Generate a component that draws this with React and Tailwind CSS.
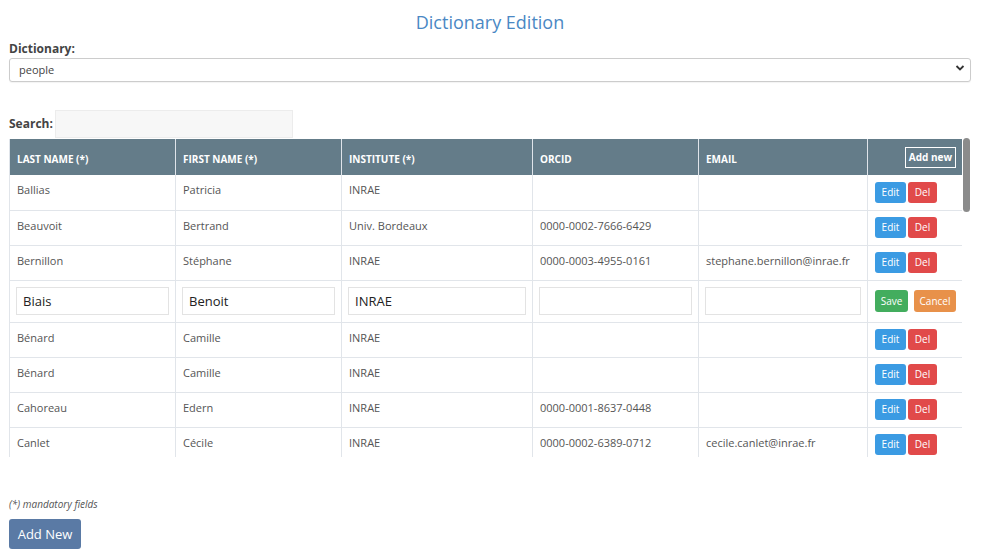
import React from 'react';

const rows = [
  { last: 'Ballias', first: 'Patricia', inst: 'INRAE', orcid: '', email: '' },
  { last: 'Beauvoit', first: 'Bertrand', inst: 'Univ. Bordeaux', orcid: '0000-0002-7666-6429', email: '' },
  { last: 'Bernillon', first: 'Stéphane', inst: 'INRAE', orcid: '0000-0003-4955-0161', email: 'stephane.bernillon@inrae.fr' },
  { edit: true, last: 'Biais', first: 'Benoit', inst: 'INRAE', orcid: '', email: '' },
  { last: 'Bénard', first: 'Camille', inst: 'INRAE', orcid: '', email: '' },
  { last: 'Bénard', first: 'Camille', inst: 'INRAE', orcid: '', email: '' },
  { last: 'Cahoreau', first: 'Edern', inst: 'INRAE', orcid: '0000-0001-8637-0448', email: '' },
  { last: 'Canlet', first: 'Cécile', inst: 'INRAE', orcid: '0000-0002-6389-0712', email: 'cecile.canlet@inrae.fr' },
];

const columns = [
  { label: 'Last name (*)', w: 'w-[166px]' },
  { label: 'First name (*)', w: 'w-[166px]' },
  { label: 'Institute (*)', w: 'w-[191px]' },
  { label: 'ORCID', w: 'w-[166px]' },
  { label: 'Email', w: 'w-[169px]' },
];

function EditInput({ value }) {
  return (
    <input
      defaultValue={value}
      className="w-full h-[28px] border border-[#e3e3e3] px-[6px] text-[13px] text-[#222] outline-none"
    />
  );
}

export default function App() {
  return (
    <div className="min-h-screen bg-white pl-[9px] pr-[13px] text-[#555] font-['Open_Sans','Noto_Sans',sans-serif]">
      <h1 className="text-center text-[18px] text-[#4a88c4] pt-[8px] leading-[28px]">Dictionary Edition</h1>

      <label className="block mt-[5px] text-[12px] font-bold text-[#444] leading-[16px]">Dictionary:</label>
      <div className="relative -mt-[1px]">
        <select className="w-full h-[24px] appearance-none rounded-[3px] border border-[#ccc] bg-white pl-[9px] text-[11px] text-[#444] outline-none shadow-[0_1px_1px_rgba(0,0,0,0.05)]">
          <option>people</option>
        </select>
        <svg className="absolute right-[6px] top-[8px] w-[10px] h-[8px] pointer-events-none" viewBox="0 0 10 8">
          <path d="M1.5 2 L5 5.5 L8.5 2" fill="none" stroke="#333" strokeWidth="1.8" />
        </svg>
      </div>

      <div className="flex items-center mt-[28px] h-[28px]">
        <span className="text-[12px] font-bold text-[#444]">Search:</span>
        <input className="ml-[2px] w-[238px] h-[28px] bg-[#f7f7f7] border border-[#ececec] outline-none" />
      </div>

      <div className="flex mt-[1px]">
        <div className="w-[954px] h-[318px] overflow-hidden">
          <table className="w-[954px] border-collapse table-fixed text-[11px]">
            <thead>
              <tr className="bg-[#647c89] h-[36px]">
                {columns.map((c) => (
                  <th key={c.label} className={`${c.w} border-x border-[#dfe4ea] text-left pl-[7px] pt-[5px] uppercase font-bold text-white text-[10px]`}>
                    {c.label}
                  </th>
                ))}
                <th className="w-[96px] border-x border-[#dfe4ea] text-right pr-[7px]">
                  <button className="border border-white text-white text-[10px] px-[3px] h-[21px] leading-[18px]">Add new</button>
                </th>
              </tr>
            </thead>
            <tbody>
              {rows.map((r, i) =>
                r.edit ? (
                  <tr key={i} className="h-[42px] border-b border-[#e1e5ea]">
                    {[r.last, r.first, r.inst, r.orcid, r.email].map((v, j) => (
                      <td key={j} className="border-x border-[#e1e5ea] px-[6px]">
                        <EditInput value={v} />
                      </td>
                    ))}
                    <td className="border-x border-[#e1e5ea] pl-[7px]">
                      <div className="flex gap-[6px]">
                        <button className="bg-[#43ad5e] text-white text-[10px] rounded-[3px] w-[33px] h-[22px]">Save</button>
                        <button className="bg-[#e8914a] text-white text-[10px] rounded-[3px] w-[42px] h-[22px]">Cancel</button>
                      </div>
                    </td>
                  </tr>
                ) : (
                  <tr key={i} className="h-[35px] border-b border-[#e1e5ea]">
                    {[r.last, r.first, r.inst, r.orcid, r.email].map((v, j) => (
                      <td key={j} className="border-x border-[#e1e5ea] pl-[7px] pb-[4px] text-[#555]">{v}</td>
                    ))}
                    <td className="border-x border-[#e1e5ea] pl-[7px]">
                      <div className="flex gap-[2px]">
                        <button className="bg-[#3b9be3] text-white text-[10px] rounded-[3px] w-[31px] h-[21px]">Edit</button>
                        <button className="bg-[#e14a4a] text-white text-[10px] rounded-[3px] w-[29px] h-[21px]">Del</button>
                      </div>
                    </td>
                  </tr>
                )
              )}
            </tbody>
          </table>
        </div>
        <div className="w-[9px] h-[318px] pl-[1px] -mt-[1px]">
          <div className="w-[7px] h-[74px] rounded-full bg-[#8b8b8b]" />
        </div>
      </div>

      <p className="mt-[41px] text-[10px] italic text-[#555] leading-[12px]">(*) mandatory fields</p>
      <button className="mt-[9px] bg-[#5a7aa5] text-white text-[13px] rounded-[3px] w-[72px] h-[30px]">Add New</button>
    </div>
  );
}
